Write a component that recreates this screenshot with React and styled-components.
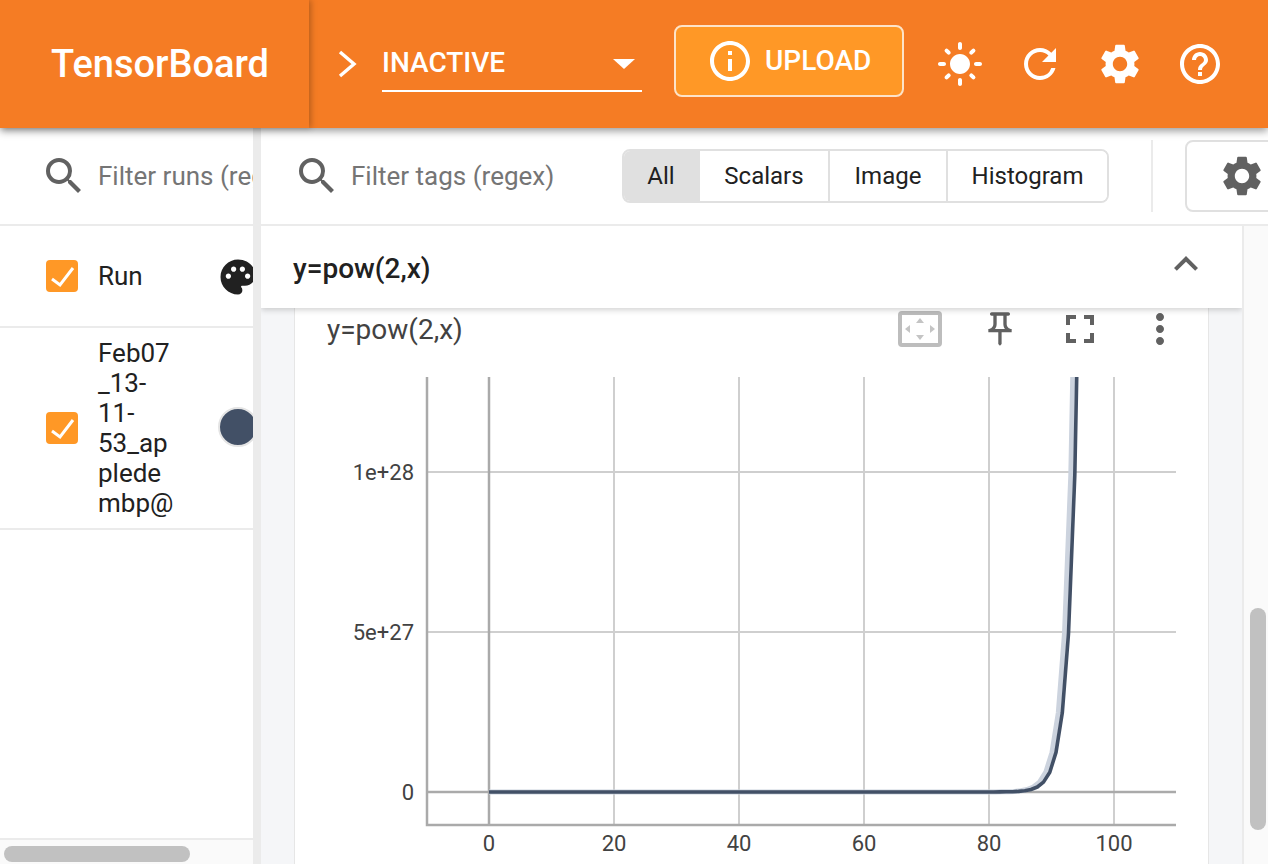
import styled, { createGlobalStyle } from 'styled-components'
import {
  MdSearch,
  MdSettings,
  MdRefresh,
  MdHelpOutline,
  MdInfoOutline,
  MdPalette,
  MdExpandLess,
  MdMoreVert,
  MdFullscreen,
  MdOutlinePushPin,
  MdLightMode,
} from 'react-icons/md'

const GlobalStyle = createGlobalStyle`
  html, body {
    margin: 0;
    padding: 0;
    height: 100%;
    overflow: hidden;
    background: #fff;
    font-family: Roboto, "Liberation Sans", sans-serif;
  }
  #root { height: 100%; }
  svg { flex: none; }
`

const Page = styled.div`
  width: 1268px;
  height: 864px;
  display: flex;
  flex-direction: column;
  overflow: hidden;
`

const Header = styled.header`
  height: 128px;
  flex: none;
  display: flex;
  align-items: stretch;
  background: #f57c24;
  color: #fff;
  box-shadow: 0 3px 8px rgba(0, 0, 0, 0.4);
  position: relative;
  z-index: 5;
`

const Logo = styled.div`
  width: 309px;
  flex: none;
  box-sizing: border-box;
  padding: 0 0 0 51px;
  display: flex;
  align-items: center;
  font-size: 38px;
  font-weight: 500;
  box-shadow: 2px 0 6px rgba(0, 0, 0, 0.25);
`

const RunPicker = styled.div`
  display: flex;
  align-items: center;
  padding-left: 28px;
`

const Chevron = styled.svg`
  margin-right: 24px;
`

const Select = styled.div`
  width: 260px;
  height: 62px;
  box-sizing: border-box;
  margin: 0 32px 0 0;
  border-bottom: 2px solid #fff;
  display: flex;
  align-items: center;
  justify-content: space-between;
  font-size: 28px;
  font-weight: 500;
  padding: 4px 7px 0 0;
  transform: translateY(-3px);
`

const Caret = styled.span`
  width: 0;
  height: 0;
  margin-top: 3px;
  border-left: 11px solid transparent;
  border-right: 11px solid transparent;
  border-top: 10px solid #fff;
`

const Upload = styled.button`
  width: 230px;
  height: 72px;
  flex: none;
  align-self: center;
  margin-top: -7px;
  box-sizing: border-box;
  border: 2px solid #fde3c8;
  border-radius: 8px;
  background: #ff9826;
  color: #fff;
  font: 500 28px Roboto, sans-serif;
  display: flex;
  align-items: center;
  padding: 0 0 0 30px;
  gap: 11px;
`

const HeaderIcons = styled.div`
  display: flex;
  align-items: center;
  gap: 32px;
  padding-left: 32px;
`

const Body = styled.div`
  flex: 1;
  min-height: 0;
  display: flex;
`

const Sidebar = styled.aside`
  width: 253px;
  flex: none;
  display: flex;
  flex-direction: column;
  overflow: hidden;
  color: #212121;
`

const Gutter = styled.div`
  width: 8px;
  flex: none;
  background: #ebebeb;
`

const FilterRow = styled.div`
  height: 98px;
  flex: none;
  box-sizing: border-box;
  border-bottom: 2px solid #ebebeb;
  display: flex;
  align-items: center;
  white-space: nowrap;
  overflow: hidden;
  padding-left: ${(props) => props.$left}px;
`

const Placeholder = styled.span`
  font-size: 26px;
  color: #757575;
  margin-left: 10px;
`

const RunRow = styled.div`
  height: ${(props) => props.$height}px;
  flex: none;
  box-sizing: border-box;
  border-bottom: 2px solid #ebebeb;
  display: grid;
  grid-template-columns: 32px 78px 1fr;
  column-gap: 20px;
  align-items: center;
  padding-left: 46px;
  font-size: 26px;
`

const Checkbox = styled.span`
  width: 32px;
  height: 32px;
  margin-top: -1px;
  border-radius: 4px;
  background: #ff9826;
  display: block;
`

const RunName = styled.span`
  line-height: 30px;
  overflow-wrap: anywhere;
`

const ColorDot = styled.span`
  width: 36px;
  height: 36px;
  flex: none;
  display: block;
  border-radius: 50%;
  background: #425066;
  border: 2px solid #e4e4e4;
  margin-top: -3px;
`

const ColorCell = styled.div`
  display: flex;
  margin-left: 22px;
  width: 60px;
`

const Spacer = styled.div`
  flex: 1;
`

const BottomScroll = styled.div`
  height: 26px;
  flex: none;
  box-sizing: border-box;
  border-top: 2px solid #ebebeb;
  background: #fafafa;
  padding: 6px 0 0 4px;
`

const HThumb = styled.div`
  width: 186px;
  height: 16px;
  border-radius: 8px;
  background: #c1c1c1;
`

const Main = styled.main`
  flex: 1;
  min-width: 0;
  display: flex;
  flex-direction: column;
`

const Toolbar = styled(FilterRow)`
  padding-right: 0;
`

const TagFilter = styled.div`
  width: 329px;
  flex: none;
  display: flex;
  align-items: center;
`

const Tabs = styled.div`
  height: 54px;
  box-sizing: border-box;
  flex: none;
  display: flex;
  border: 2px solid #e0e0e0;
  border-radius: 8px;
  overflow: hidden;
`

const Tab = styled.div`
  width: ${(props) => props.$width}px;
  box-sizing: border-box;
  display: flex;
  align-items: center;
  justify-content: center;
  font-size: 24px;
  color: #212121;
  background: ${(props) => (props.$active ? '#e0e0e0' : '#fff')};
  border-right: ${(props) => (props.$last ? 'none' : '2px solid #e0e0e0')};
`

const ToolDivider = styled.div`
  width: 2px;
  height: 72px;
  flex: none;
  margin: 0 32px 0 42px;
  background: #ebebeb;
`

const GearButton = styled.div`
  width: 110px;
  height: 72px;
  flex: none;
  box-sizing: border-box;
  border: 2px solid #e0e0e0;
  border-radius: 8px;
  display: flex;
  align-items: center;
  padding-left: 31px;
  color: #616161;
`

const Content = styled.div`
  flex: 1;
  min-height: 0;
  display: flex;
`

const Scroller = styled.div`
  width: 981px;
  flex: none;
  background: #f5f6f8;
  overflow: hidden;
`

const SectionHeader = styled.div`
  height: 82px;
  box-sizing: border-box;
  background: #fff;
  box-shadow: 0 2px 6px rgba(0, 0, 0, 0.18);
  display: flex;
  align-items: center;
  justify-content: space-between;
  padding: 2px 32px 0 32px;
  font-size: 28px;
  font-weight: 500;
  color: #212121;
  position: relative;
  z-index: 2;
`

const Card = styled.section`
  width: 915px;
  height: 560px;
  box-sizing: border-box;
  margin-left: 33px;
  background: #fff;
  border-left: 1px solid #e6e6e6;
  border-right: 1px solid #e6e6e6;
`

const CardTitleRow = styled.div`
  height: 52px;
  box-sizing: border-box;
  display: flex;
  align-items: center;
  padding: 0 8px 0 32px;
  font-size: 28px;
  color: #424242;
`

const CardTitle = styled.span`
  flex: 1;
  margin-top: -9px;
`

const CardActions = styled.div`
  display: flex;
  align-items: center;
  color: #616161;
  margin-top: -10px;
`

const ActionCell = styled.span`
  width: 80px;
  display: flex;
  justify-content: center;
`

const RightScroll = styled.div`
  flex: 1;
  box-sizing: border-box;
  border-left: 2px solid #ebebeb;
  background: #fafafa;
  padding: 382px 0 0 6px;
`

const VThumb = styled.div`
  width: 16px;
  height: 222px;
  border-radius: 8px;
  background: #c1c1c1;
`

const ChartSvg = styled.svg`
  display: block;
  font-family: Roboto, sans-serif;
  font-size: 22px;
`

const FitIcon = () => (
  <svg width="44" height="36" viewBox="0 0 44 36">
    <rect x="2" y="2" width="40" height="32" rx="2" fill="none" stroke="#bdbdbd" strokeWidth="4" />
    <g fill="#c4c4c4">
      <path d="M22 7l4 5h-8z" />
      <path d="M22 29l4-5h-8z" />
      <path d="M7 18l5-4v8z" />
      <path d="M37 18l-5-4v8z" />
    </g>
  </svg>
)

const CheckedBox = () => (
  <Checkbox>
    <svg width="32" height="32" viewBox="0 0 32 32">
      <path d="M6 19l8 6L27 8" fill="none" stroke="#fff" strokeWidth="3" />
    </svg>
  </Checkbox>
)

const X0 = 489
const PX_PER_X = 6.25
const Y0 = 792
const PX_PER_Y = 160 / 5e27
const TOP = 377

// exponent curve sampled at integer steps, like the logged scalar points
const curvePoints = (shift) => {
  const pts = []
  for (let x = 0; x <= 100; x++) {
    const y = Y0 - Math.pow(2, x) * PX_PER_Y
    pts.push(`${(X0 + x * PX_PER_X + (x > 0 ? shift : 0)).toFixed(1)},${y.toFixed(1)}`)
    if (y < TOP) break
  }
  return pts.join(' ')
}

const Chart = () => {
  const vLines = [614, 739, 864, 989, 1114]
  const hLines = [472, 632]
  const xLabels = [
    [489, '0'],
    [614, '20'],
    [739, '40'],
    [864, '60'],
    [989, '80'],
    [1114, '100'],
  ]
  const yLabels = [
    [472, '1e+28'],
    [632, '5e+27'],
    [792, '0'],
  ]
  return (
    <ChartSvg width="913" height="504" viewBox="295 360 913 504">
      <defs>
        <clipPath id="plot">
          <rect x="426" y={TOP} width="750" height="448" />
        </clipPath>
      </defs>
      {vLines.map((x) => (
        <line key={x} x1={x} x2={x} y1={TOP} y2="825" stroke="#cfcfcf" strokeWidth="2" />
      ))}
      {hLines.map((y) => (
        <line key={y} x1="426" x2="1176" y1={y} y2={y} stroke="#cfcfcf" strokeWidth="2" />
      ))}
      <line x1="489" x2="489" y1={TOP} y2="825" stroke="#aaa" strokeWidth="2.5" />
      <line x1="426" x2="1176" y1="792" y2="792" stroke="#aaa" strokeWidth="2.5" />
      <path d={`M427 ${TOP}V825H1176`} fill="none" stroke="#aaa" strokeWidth="2.5" />
      <g clipPath="url(#plot)" fill="none" strokeLinejoin="round">
        <polyline points={curvePoints(0.5)} stroke="#ccd3de" strokeWidth="5" />
        <polyline points={curvePoints(4.5)} stroke="#425066" strokeWidth="3.6" />
      </g>
      <g fill="#424242">
        {yLabels.map(([y, t]) => (
          <text key={t} x="414" y={y + 7.5} textAnchor="end">
            {t}
          </text>
        ))}
        {xLabels.map(([x, t]) => (
          <text key={t} x={x} y="851" textAnchor="middle">
            {t}
          </text>
        ))}
      </g>
    </ChartSvg>
  )
}

export default function App() {
  return (
    <Page>
      <GlobalStyle />
      <Header>
        <Logo>TensorBoard</Logo>
        <RunPicker>
          <Chevron width="21" height="28" viewBox="0 0 21 28">
            <path d="M3 2l14 12L3 26" fill="none" stroke="#fff" strokeWidth="3.4" />
          </Chevron>
          <Select>
            INACTIVE
            <Caret />
          </Select>
          <Upload>
            <MdInfoOutline size={48} />
            UPLOAD
          </Upload>
        </RunPicker>
        <HeaderIcons>
          <MdLightMode size={48} />
          <MdRefresh size={48} />
          <MdSettings size={48} />
          <MdHelpOutline size={48} />
        </HeaderIcons>
      </Header>
      <Body>
        <Sidebar>
          <FilterRow $left={40}>
            <MdSearch size={48} color="#616161" />
            <Placeholder>Filter runs (regex)</Placeholder>
          </FilterRow>
          <RunRow $height={102}>
            <CheckedBox />
            <RunName>Run</RunName>
            <ColorCell>
              <MdPalette size={42} color="#212121" style={{ marginLeft: -1, marginTop: 2 }} />
            </ColorCell>
          </RunRow>
          <RunRow $height={202}>
            <CheckedBox />
            <RunName>Feb07_13-11-53_appledembp@</RunName>
            <ColorCell>
              <ColorDot />
            </ColorCell>
          </RunRow>
          <Spacer />
          <BottomScroll>
            <HThumb />
          </BottomScroll>
        </Sidebar>
        <Gutter />
        <Main>
          <Toolbar $left={32}>
            <TagFilter>
              <MdSearch size={48} color="#616161" />
              <Placeholder>Filter tags (regex)</Placeholder>
            </TagFilter>
            <Tabs>
              <Tab $width={76} $active>
                All
              </Tab>
              <Tab $width={130}>Scalars</Tab>
              <Tab $width={118}>Image</Tab>
              <Tab $width={159} $last>
                Histogram
              </Tab>
            </Tabs>
            <ToolDivider />
            <GearButton>
              <MdSettings size={48} />
            </GearButton>
          </Toolbar>
          <Content>
            <Scroller>
              <SectionHeader>
                y=pow(2,x)
                <MdExpandLess size={48} color="#616161" style={{ marginTop: -8 }} />
              </SectionHeader>
              <Card>
                <CardTitleRow>
                  <CardTitle>y=pow(2,x)</CardTitle>
                  <CardActions>
                    <ActionCell>
                      <FitIcon />
                    </ActionCell>
                    <ActionCell>
                      <MdOutlinePushPin size={40} />
                    </ActionCell>
                    <ActionCell>
                      <MdFullscreen size={48} />
                    </ActionCell>
                    <ActionCell>
                      <MdMoreVert size={48} />
                    </ActionCell>
                  </CardActions>
                </CardTitleRow>
                <Chart />
              </Card>
            </Scroller>
            <RightScroll>
              <VThumb />
            </RightScroll>
          </Content>
        </Main>
      </Body>
    </Page>
  )
}
